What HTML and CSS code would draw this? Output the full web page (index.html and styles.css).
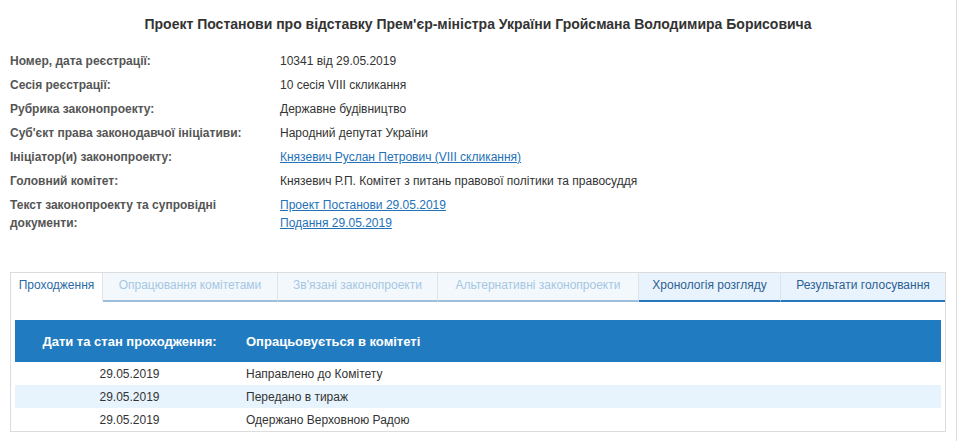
FILE: index.html
```html
<!DOCTYPE html>
<html lang="uk">
<head>
<meta charset="utf-8">
<title>Проект Постанови</title>
<link rel="stylesheet" href="styles.css">
</head>
<body>
<div class="page">
  <h1 class="title">Проект Постанови про відставку Прем'єр-міністра України Гройсмана Володимира Борисовича</h1>
  <div class="info">
    <div class="row"><div class="label">Номер, дата реєстрації:</div><div class="value">10341 від 29.05.2019</div></div>
    <div class="row"><div class="label">Сесія реєстрації:</div><div class="value">10 сесія VIII скликання</div></div>
    <div class="row"><div class="label">Рубрика законопроекту:</div><div class="value">Державне будівництво</div></div>
    <div class="row"><div class="label">Суб'єкт права законодавчої ініціативи:</div><div class="value">Народний депутат України</div></div>
    <div class="row"><div class="label">Ініціатор(и) законопроекту:</div><div class="value"><a href="#">Князевич Руслан Петрович (VIII скликання)</a></div></div>
    <div class="row"><div class="label">Головний комітет:</div><div class="value">Князевич Р.П. Комітет з питань правової політики та правосуддя</div></div>
    <div class="row"><div class="label">Текст законопроекту та супровідні документи:</div><div class="value"><a href="#">Проект Постанови 29.05.2019</a><br><a href="#">Подання 29.05.2019</a></div></div>
  </div>

  <div class="panel">
    <div class="tabs">
      <div class="tab active">Проходження</div>
      <div class="tab off">Опрацювання комітетами</div>
      <div class="tab off">Зв'язані законопроекти</div>
      <div class="tab off">Альтернативні законопроекти</div>
      <div class="tab on">Хронологія розгляду</div>
      <div class="tab on last">Результати голосування</div>
    </div>
    <div class="content">
      <div class="thead">
        <div class="c1">Дати та стан проходження:</div>
        <div class="c2">Опрацьовується в комітеті</div>
      </div>
      <div class="tr"><div class="c1">29.05.2019</div><div class="c2">Направлено до Комітету</div></div>
      <div class="tr alt"><div class="c1">29.05.2019</div><div class="c2">Передано в тираж</div></div>
      <div class="tr"><div class="c1">29.05.2019</div><div class="c2">Одержано Верховною Радою</div></div>
    </div>
  </div>
</div>
</body>
</html>
```

FILE: styles.css
```css
html, body {
  margin: 0;
  padding: 0;
  background: #fff;
}
body {
  font-family: "Liberation Sans", Arial, sans-serif;
  font-size: 12px;
  color: #333;
}
.page {
  width: 956px;
  min-height: 441px;
  border-right: 1px solid #dcdcdc;
  box-sizing: content-box;
}
.title {
  margin: 0;
  padding: 15px 0 0 0;
  font-size: 14px;
  line-height: 18px;
  font-weight: bold;
  text-align: center;
  color: #333;
}
.info {
  margin-top: 19px;
  padding-left: 10px;
}
.row {
  display: grid;
  grid-template-columns: 270px 1fr;
  line-height: 18px;
  margin-bottom: 6px;
}
.label {
  font-weight: bold;
  color: #555;
}
.value {
  color: #333;
}
.value a {
  color: #2471b8;
  text-decoration: underline;
}
.panel {
  margin: 40px 0 0 10px;
  width: 934px;
  border: 1px solid #dcdcdc;
}
.tabs {
  display: grid;
  grid-template-columns: 92px 175px 160px 201px 142px 1fr;
}
.tab {
  padding: 3px 0 6px;
  line-height: 18px;
  text-align: center;
  border-right: 1px solid #dde3ea;
  border-bottom: 2px solid transparent;
  box-sizing: border-box;
}
.tab.last {
  border-right: none;
}
.tab.active {
  background: #fff;
  color: #2a6aa6;
  border-right-color: #e3e3e3;
}
.tab.off {
  background: #f3f8fd;
  color: #a5c7e3;
  border-bottom-color: #9ebfdb;
}
.tab.on {
  background: #e8f3fd;
  color: #2d5f92;
  border-bottom-color: #2677bd;
}
.content {
  padding: 18px 4px 0 4px;
}
.thead {
  display: grid;
  grid-template-columns: 229px 1fr;
  background: #217bc1;
  color: #fff;
  font-weight: bold;
  font-size: 13px;
  height: 42px;
  align-items: center;
}
.tr {
  display: grid;
  grid-template-columns: 229px 1fr;
  height: 23px;
  align-items: center;
  color: #333;
}
.tr.alt {
  background: #e8f4fd;
}
.c1 {
  text-align: center;
}
.c2 {
  padding-left: 2px;
}
```
